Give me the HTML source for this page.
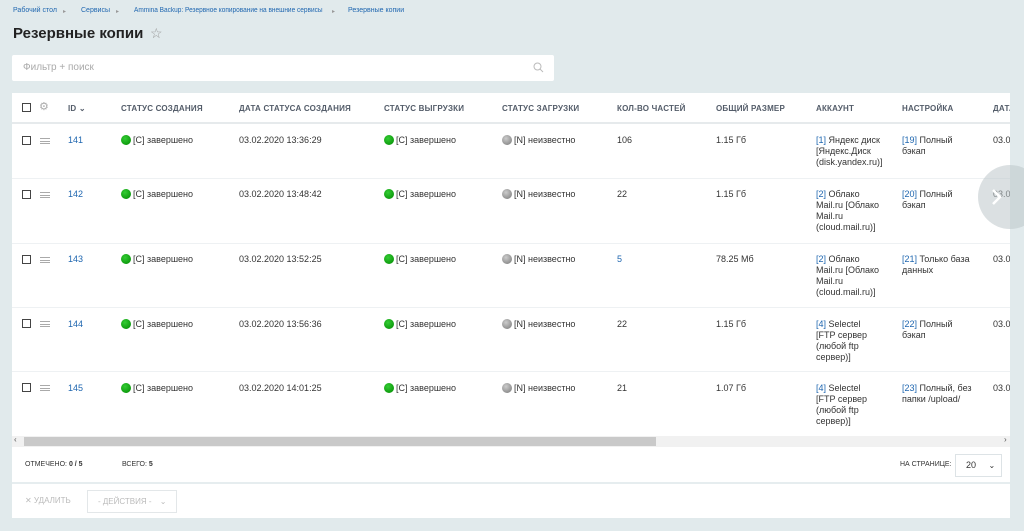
<!DOCTYPE html>
<html><head><meta charset="utf-8"><style>
*{box-sizing:border-box;margin:0;padding:0}
body{width:1024px;height:531px;overflow:hidden;background:#e1eaec;font-family:"Liberation Sans",sans-serif;position:relative;color:#333}
.a{position:absolute;white-space:nowrap}
.bc{font-size:7px;color:#2067b0;top:7px}
.bs{font-size:6px;color:#999;top:8px}
.t{font-size:9px;color:#333;line-height:11px}
.h{font-size:8px;font-weight:bold;color:#535c69;letter-spacing:.2px;top:104px}
.cb{width:9px;height:9px;border:1px solid #444;background:#fff}
.ham{width:10px;height:6px;border-top:1px solid #aaa;border-bottom:1px solid #aaa}
.ham:after{content:"";position:absolute;left:0;top:2px;width:10px;border-top:1px solid #aaa}
.lnk{color:#2067b0;font-size:9px}
.dg,.dn{display:inline-block;width:10px;height:10px;border-radius:50%;vertical-align:-2px;margin-right:2px}
.dg{background:radial-gradient(circle at 40% 35%,#3c3,#080)}
.dn{background:radial-gradient(circle at 40% 35%,#ccc,#777)}
.sep{position:absolute;left:12px;width:998px;height:1px;background:#eef1f3}
</style></head><body>
<div class="a bc" style="left:13px">Рабочий стол</div><div class="a bs" style="left:63px">▸</div>
<div class="a bc" style="left:81px">Сервисы</div><div class="a bs" style="left:116px">▸</div>
<div class="a bc" style="left:134px;transform:scaleX(.93);transform-origin:left">Ammina Backup: Резервное копирование на внешние сервисы</div><div class="a bs" style="left:332px">▸</div>
<div class="a bc" style="left:348px">Резервные копии</div>
<div class="a" style="left:13px;top:25px;font-size:15px;font-weight:bold;color:#222">Резервные копии</div>
<div class="a" style="left:150px;top:25px;font-size:14px;color:#999">☆</div>
<div class="a" style="left:12px;top:55px;width:542px;height:26px;background:#fff;border-radius:2px"></div>
<div class="a" style="left:23px;top:62px;font-size:10px;color:#aaa">Фильтр + поиск</div>
<svg class="a" style="left:533px;top:62px" width="11" height="11"><circle cx="4.5" cy="4.5" r="3.5" fill="none" stroke="#bbb"/><line x1="7" y1="7" x2="10" y2="10" stroke="#bbb"/></svg>
<div class="a" style="left:12px;top:93px;width:998px;height:425px;background:#fff"></div>
<div class="sep" style="top:122px;background:#e6eaec;height:2px"></div>
<div class="a cb" style="left:22px;top:103px"></div>
<div class="a" style="left:39px;top:100px;font-size:11px;color:#aaa">⚙</div>
<div class="a h" style="left:68px">ID ⌄</div>
<div class="a h" style="left:121px">СТАТУС СОЗДАНИЯ</div>
<div class="a h" style="left:239px">ДАТА СТАТУСА СОЗДАНИЯ</div>
<div class="a h" style="left:384px">СТАТУС ВЫГРУЗКИ</div>
<div class="a h" style="left:502px">СТАТУС ЗАГРУЗКИ</div>
<div class="a h" style="left:617px">КОЛ-ВО ЧАСТЕЙ</div>
<div class="a h" style="left:716px">ОБЩИЙ РАЗМЕР</div>
<div class="a h" style="left:816px">АККАУНТ</div>
<div class="a h" style="left:902px">НАСТРОЙКА</div>
<div class="a h" style="left:993px">ДАТА</div>

<div class="a cb" style="left:22px;top:136px"></div><div class="a ham" style="left:40px;top:138px"></div>
<div class="a lnk" style="left:68px;top:135px">141</div>
<div class="a t" style="left:121px;top:135px"><span class="dg"></span>[C] завершено</div>
<div class="a t" style="left:239px;top:135px">03.02.2020 13:36:29</div>
<div class="a t" style="left:384px;top:135px"><span class="dg"></span>[C] завершено</div>
<div class="a t" style="left:502px;top:135px"><span class="dn"></span>[N] неизвестно</div>
<div class="a t" style="left:617px;top:135px">106</div>
<div class="a t" style="left:716px;top:135px">1.15 Гб</div>
<div class="a t" style="left:816px;top:135px"><span style="color:#2067b0">[1]</span> Яндекс диск<br>[Яндекс.Диск<br>(disk.yandex.ru)]</div>
<div class="a t" style="left:902px;top:135px"><span style="color:#2067b0">[19]</span> Полный<br>бэкап</div>
<div class="a t" style="left:993px;top:135px">03.0</div>
<div class="sep" style="top:178px"></div>

<div class="a cb" style="left:22px;top:190px"></div><div class="a ham" style="left:40px;top:192px"></div>
<div class="a lnk" style="left:68px;top:189px">142</div>
<div class="a t" style="left:121px;top:189px"><span class="dg"></span>[C] завершено</div>
<div class="a t" style="left:239px;top:189px">03.02.2020 13:48:42</div>
<div class="a t" style="left:384px;top:189px"><span class="dg"></span>[C] завершено</div>
<div class="a t" style="left:502px;top:189px"><span class="dn"></span>[N] неизвестно</div>
<div class="a t" style="left:617px;top:189px">22</div>
<div class="a t" style="left:716px;top:189px">1.15 Гб</div>
<div class="a t" style="left:816px;top:189px"><span style="color:#2067b0">[2]</span> Облако<br>Mail.ru [Облако<br>Mail.ru<br>(cloud.mail.ru)]</div>
<div class="a t" style="left:902px;top:189px"><span style="color:#2067b0">[20]</span> Полный<br>бэкап</div>
<div class="a t" style="left:993px;top:189px">03.0</div>
<div class="sep" style="top:243px"></div>

<div class="a cb" style="left:22px;top:255px"></div><div class="a ham" style="left:40px;top:257px"></div>
<div class="a lnk" style="left:68px;top:254px">143</div>
<div class="a t" style="left:121px;top:254px"><span class="dg"></span>[C] завершено</div>
<div class="a t" style="left:239px;top:254px">03.02.2020 13:52:25</div>
<div class="a t" style="left:384px;top:254px"><span class="dg"></span>[C] завершено</div>
<div class="a t" style="left:502px;top:254px"><span class="dn"></span>[N] неизвестно</div>
<div class="a lnk" style="left:617px;top:254px">5</div>
<div class="a t" style="left:716px;top:254px">78.25 Мб</div>
<div class="a t" style="left:816px;top:254px"><span style="color:#2067b0">[2]</span> Облако<br>Mail.ru [Облако<br>Mail.ru<br>(cloud.mail.ru)]</div>
<div class="a t" style="left:902px;top:254px"><span style="color:#2067b0">[21]</span> Только база<br>данных</div>
<div class="a t" style="left:993px;top:254px">03.0</div>
<div class="sep" style="top:307px"></div>

<div class="a cb" style="left:22px;top:319px"></div><div class="a ham" style="left:40px;top:321px"></div>
<div class="a lnk" style="left:68px;top:319px">144</div>
<div class="a t" style="left:121px;top:319px"><span class="dg"></span>[C] завершено</div>
<div class="a t" style="left:239px;top:319px">03.02.2020 13:56:36</div>
<div class="a t" style="left:384px;top:319px"><span class="dg"></span>[C] завершено</div>
<div class="a t" style="left:502px;top:319px"><span class="dn"></span>[N] неизвестно</div>
<div class="a t" style="left:617px;top:319px">22</div>
<div class="a t" style="left:716px;top:319px">1.15 Гб</div>
<div class="a t" style="left:816px;top:319px"><span style="color:#2067b0">[4]</span> Selectel<br>[FTP сервер<br>(любой ftp<br>сервер)]</div>
<div class="a t" style="left:902px;top:319px"><span style="color:#2067b0">[22]</span> Полный<br>бэкап</div>
<div class="a t" style="left:993px;top:319px">03.0</div>
<div class="sep" style="top:371px"></div>

<div class="a cb" style="left:22px;top:383px"></div><div class="a ham" style="left:40px;top:385px"></div>
<div class="a lnk" style="left:68px;top:383px">145</div>
<div class="a t" style="left:121px;top:383px"><span class="dg"></span>[C] завершено</div>
<div class="a t" style="left:239px;top:383px">03.02.2020 14:01:25</div>
<div class="a t" style="left:384px;top:383px"><span class="dg"></span>[C] завершено</div>
<div class="a t" style="left:502px;top:383px"><span class="dn"></span>[N] неизвестно</div>
<div class="a t" style="left:617px;top:383px">21</div>
<div class="a t" style="left:716px;top:383px">1.07 Гб</div>
<div class="a t" style="left:816px;top:383px"><span style="color:#2067b0">[4]</span> Selectel<br>[FTP сервер<br>(любой ftp<br>сервер)]</div>
<div class="a t" style="left:902px;top:383px"><span style="color:#2067b0">[23]</span> Полный, без<br>папки /upload/</div>
<div class="a t" style="left:993px;top:383px">03.0</div>

<div class="a" style="left:1010px;top:93px;width:14px;height:350px;background:#e1eaec"></div>
<div class="a" style="left:978px;top:165px;width:64px;height:64px;border-radius:50%;background:rgba(190,198,202,.55)"></div>
<svg class="a" style="left:990px;top:188px" width="14" height="18"><path d="M3 2 L10 9 L3 16" fill="none" stroke="#fff" stroke-width="2.5"/></svg>

<div class="a" style="left:12px;top:436px;width:998px;height:11px;background:#f1f1f1"></div>
<div class="a" style="left:24px;top:437px;width:632px;height:9px;background:#c9c9c9"></div>
<div class="a" style="left:14px;top:435px;font-size:8px;color:#555">‹</div>
<div class="a" style="left:1004px;top:435px;font-size:8px;color:#555">›</div>

<div class="a" style="left:25px;top:461px;font-size:7px;color:#333">ОТМЕЧЕНО: <b>0 / 5</b></div>
<div class="a" style="left:122px;top:461px;font-size:7px;color:#333">ВСЕГО: <b>5</b></div>
<div class="a" style="left:900px;top:461px;font-size:7px;color:#333">НА СТРАНИЦЕ:</div>
<div class="a" style="left:955px;top:454px;width:47px;height:23px;border:1px solid #dde3e6;font-size:9px;padding:5px 0 0 10px">20 <span style="margin-left:10px;font-size:8px">⌄</span></div>
<div class="a" style="left:12px;top:482px;width:998px;height:2px;background:#e6edef"></div>
<div class="a" style="left:25px;top:496px;font-size:8px;color:#bbb">✕ УДАЛИТЬ</div>
<div class="a" style="left:87px;top:490px;width:90px;height:23px;border:1px solid #e3e7e9;font-size:8px;color:#bbb;padding:6px 0 0 10px">- ДЕЙСТВИЯ - <span style="margin-left:6px">⌄</span></div>
</body></html>
